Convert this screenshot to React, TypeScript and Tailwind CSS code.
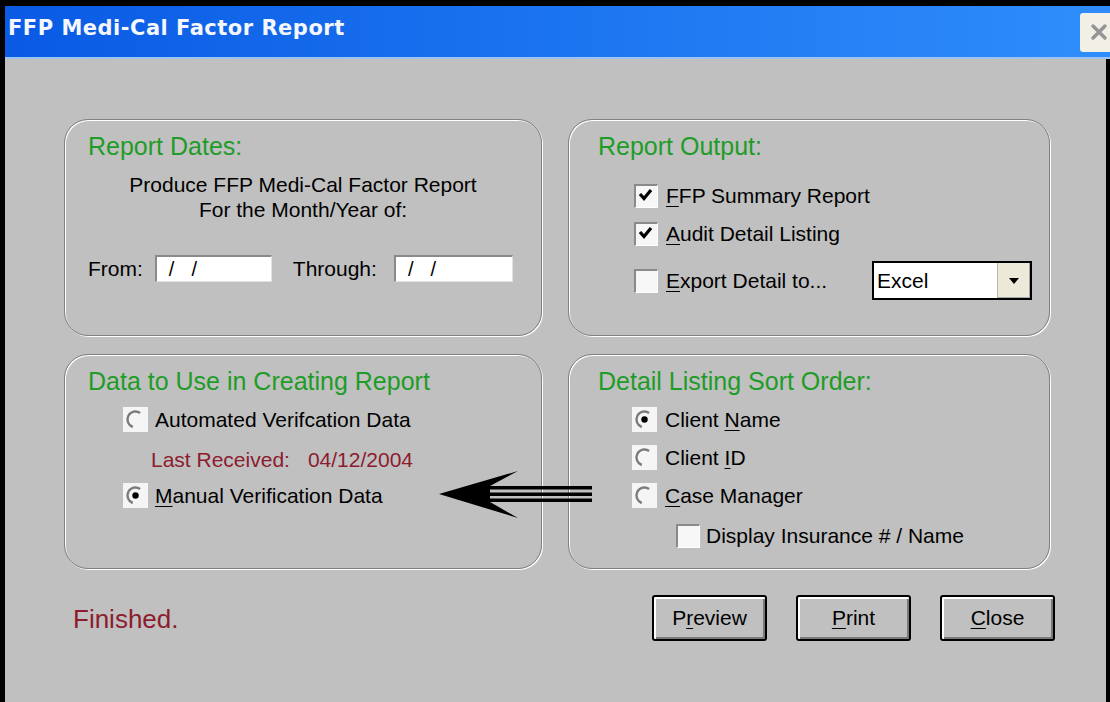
import type { ReactNode } from 'react';

const green = 'text-[#1e9c27]';
const darkRed = 'text-[#8c1c2e]';

function Underlined({ children }: { children: ReactNode }) {
  return <u className="decoration-1 underline-offset-[3px]">{children}</u>;
}

function CheckBox({ checked }: { checked?: boolean }) {
  return (
    <div className="flex h-[24px] w-[24px] shrink-0 border-t-2 border-r border-b border-l-2 border-t-[#8a8a8a] border-r-white border-b-white border-l-[#8a8a8a] bg-[#f7f7f7]">
      {checked && (
        <svg width="21" height="21" viewBox="0 0 21 21">
          <polyline points="4,8 8,12.5 15,4" fill="none" stroke="#000" strokeWidth="3.2" />
        </svg>
      )}
    </div>
  );
}

function Radio({ selected }: { selected?: boolean }) {
  return (
    <svg width="25" height="25" viewBox="0 0 25 25" className="shrink-0">
      <rect width="25" height="25" fill="#f5f5f5" />
      <path d="M17.1 5.95 A8 8 0 1 0 9.76 20" fill="none" stroke="#7b7b7b" strokeWidth="2.4" />
      {selected && <circle cx="12.5" cy="12.5" r="3.2" fill="#000" />}
    </svg>
  );
}

function DateField({ width }: { width: string }) {
  return (
    <div
      className={`flex h-[27px] ${width} items-center border-t-2 border-r border-b border-l-2 border-t-[#8a8a8a] border-r-[#e2e2e2] border-b-[#e2e2e2] border-l-[#8a8a8a] bg-white pl-[12px] text-[20px]`}
    >
      <span>/</span>
      <span className="ml-[17px]">/</span>
    </div>
  );
}

function GroupBox({ children, className }: { children: ReactNode; className?: string }) {
  return (
    <div
      className={`rounded-[24px] border border-[#808080] pt-[11px] shadow-[inset_1px_1px_0_#fff,1px_1px_0_#fff] ${className ?? ''}`}
    >
      {children}
    </div>
  );
}

function Heading({ children }: { children: ReactNode }) {
  return <div className={`text-[25px] leading-[30px] ${green}`}>{children}</div>;
}

function DialogButton({ children }: { children: ReactNode }) {
  return (
    <button className="h-[46px] w-[115px] rounded-[3px] border-2 border-black bg-[#c0c0c0] text-[21px] shadow-[inset_2px_2px_0_#fff,inset_-2px_-2px_0_#7a7a7a]">
      {children}
    </button>
  );
}

function TitleBar() {
  return (
    <div className="flex h-[51px] bg-gradient-to-r from-[#0a5ae4] to-[#2f8dfb]">
      <div className="pt-[12px] pl-[3px] font-['DejaVu_Sans',sans-serif] text-[21px] leading-[21px] font-bold tracking-[0.5px] text-[#f4f7ff]">
        FFP Medi-Cal Factor Report
      </div>
      <div className="mt-[7px] ml-auto h-[39px] w-[30px] rounded-l-[3px] bg-[#f1efe6]">
        <svg width="30" height="39" viewBox="0 0 30 39">
          <path d="M13 13 L25 25 M25 13 L13 25" stroke="#959595" strokeWidth="3.5" strokeLinecap="round" />
        </svg>
      </div>
    </div>
  );
}

function Arrow() {
  return (
    <svg width="160" height="54" viewBox="0 0 160 54" className="absolute top-[468px] left-[437px]">
      <rect x="50" y="18" width="105" height="3.5" fill="#000" />
      <rect x="50" y="24.5" width="105" height="3.5" fill="#000" />
      <rect x="50" y="30.5" width="105" height="3.5" fill="#000" />
      <polygon points="2,26 81,3 53,18 53,34 81,50" fill="#000" />
    </svg>
  );
}

export default function App() {
  return (
    <div className="relative h-[702px] w-[1110px] overflow-hidden bg-black pt-[6px] pl-[5px] font-['Liberation_Sans',Arial,sans-serif] text-black">
      <div className="flex h-full flex-col">
        <TitleBar />
        <div className="h-[2px] bg-[#9cc3f2]" />

        <div className="flex-1 border-r-4 border-black bg-[#c0c0c0] pt-[60px] pl-[59px]">
          <div className="grid grid-cols-[478px_482px] grid-rows-[217px_215px] gap-x-[26px] gap-y-[18px]">
            {/* Report dates */}
            <GroupBox className="pl-[23px]">
              <Heading>Report Dates:</Heading>
              <div className="mt-[11px] -ml-[23px] text-center text-[21px] leading-[25px]">
                <div>Produce FFP Medi-Cal Factor Report</div>
                <div>For the Month/Year of:</div>
              </div>
              <div className="mt-[31px] flex items-center text-[21px]">
                <span>From:</span>
                <div className="ml-[12px]">
                  <DateField width="w-[117px]" />
                </div>
                <span className="ml-[21px]">Through:</span>
                <div className="ml-[17px]">
                  <DateField width="w-[119px]" />
                </div>
              </div>
            </GroupBox>

            {/* Report output */}
            <GroupBox className="pr-[17px] pl-[29px]">
              <Heading>Report Output:</Heading>
              <div className="mt-[23px] ml-[36px] flex flex-col text-[21px]">
                <div className="flex h-[24px] items-center gap-[8px]">
                  <CheckBox checked />
                  <span>
                    <Underlined>F</Underlined>FP Summary Report
                  </span>
                </div>
                <div className="mt-[14px] flex h-[24px] items-center gap-[8px]">
                  <CheckBox checked />
                  <span>
                    <Underlined>A</Underlined>udit Detail Listing
                  </span>
                </div>
                <div className="mt-[15px] flex h-[39px] items-center gap-[8px]">
                  <CheckBox />
                  <span>
                    <Underlined>E</Underlined>xport Detail to...
                  </span>
                  <div className="ml-auto flex h-[39px] w-[160px] border-2 border-black bg-white">
                    <div className="flex flex-1 items-center pl-[3px]">Excel</div>
                    <div className="flex w-[33px] items-center justify-center border-l border-[#b5b5b5] bg-[#ece9d8] shadow-[inset_-1px_-1px_0_#a8a8a8]">
                      <svg width="12" height="8" viewBox="0 0 12 8">
                        <polygon points="1,1 11,1 6,7" fill="#000" />
                      </svg>
                    </div>
                  </div>
                </div>
              </div>
            </GroupBox>

            {/* Data source */}
            <GroupBox className="pl-[23px]">
              <Heading>Data to Use in Creating Report</Heading>
              <div className="mt-[11px] ml-[35px] flex flex-col text-[21px]">
                <div className="flex h-[25px] items-center gap-[7px]">
                  <Radio />
                  <span>Automated Verifcation Data</span>
                </div>
                <div className={`mt-[15px] ml-[28px] leading-[25px] ${darkRed}`}>
                  Last Received:<span className="ml-[18px]">04/12/2004</span>
                </div>
                <div className="mt-[11px] flex h-[25px] items-center gap-[7px]">
                  <Radio selected />
                  <span>
                    <Underlined>M</Underlined>anual Verification Data
                  </span>
                </div>
              </div>
            </GroupBox>

            {/* Sort order */}
            <GroupBox className="pl-[29px]">
              <Heading>Detail Listing Sort Order:</Heading>
              <div className="mt-[11px] ml-[34px] flex flex-col gap-[13px] text-[21px]">
                <div className="flex h-[25px] items-center gap-[8px]">
                  <Radio selected />
                  <span>
                    Client <Underlined>N</Underlined>ame
                  </span>
                </div>
                <div className="flex h-[25px] items-center gap-[8px]">
                  <Radio />
                  <span>
                    Client <Underlined>I</Underlined>D
                  </span>
                </div>
                <div className="flex h-[25px] items-center gap-[8px]">
                  <Radio />
                  <span>
                    <Underlined>C</Underlined>ase Manager
                  </span>
                </div>
              </div>
              <div className="mt-[15px] ml-[78px] flex h-[25px] items-center gap-[6px] text-[21px]">
                <CheckBox />
                <span>Display Insurance # / Name</span>
              </div>
            </GroupBox>
          </div>

          <div className="mt-[26px] flex items-center pl-[9px]">
            <span className={`mt-[3px] w-[579px] text-[26px] ${darkRed}`}>Finished.</span>
            <div className="flex gap-[29px]">
              <DialogButton>
                P<Underlined>r</Underlined>eview
              </DialogButton>
              <DialogButton>
                <Underlined>P</Underlined>rint
              </DialogButton>
              <DialogButton>
                <Underlined>C</Underlined>lose
              </DialogButton>
            </div>
          </div>
        </div>
      </div>

      <Arrow />
    </div>
  );
}
